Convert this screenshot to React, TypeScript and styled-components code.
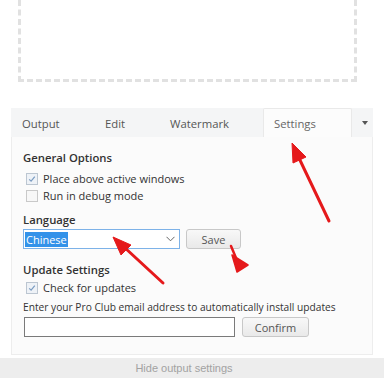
import React from "react";
import styled, { createGlobalStyle } from "styled-components";

const GlobalStyle = createGlobalStyle`
  html, body {
    margin: 0;
    padding: 0;
    background: #ffffff;
  }
  body {
    font-family: "Open Sans", "Noto Sans", "DejaVu Sans", sans-serif;
    color: #333;
  }
`;

const tabs = [
  { label: "Output", width: 83, active: false },
  { label: "Edit", width: 65, active: false },
  { label: "Watermark", width: 104, active: false },
  { label: "Settings", width: 89, active: true },
];

const Checkbox: React.FC<{ checked?: boolean }> = ({ checked }) => (
  <Box $checked={checked}>
    {checked && (
      <svg width="8" height="8" viewBox="0 0 8 8">
        <path d="M1.2 4.3 L3.1 6.2 L6.8 1.6" fill="none" stroke="#7b9cc2" strokeWidth="1.2" />
      </svg>
    )}
  </Box>
);

// red annotation arrows drawn over the screenshot
const Arrows = () => (
  <Overlay width="384" height="378" viewBox="0 0 384 378">
    <g fill="#e5191b" stroke="#e5191b" strokeLinejoin="round">
      <line x1="329" y1="221" x2="298" y2="156" strokeWidth="3" strokeLinecap="round" />
      <polygon points="292,143 293,163 306,157" strokeWidth="1" />
      <line x1="163" y1="283" x2="124" y2="247" strokeWidth="3" strokeLinecap="round" />
      <polygon points="113,237 121,255 131,245" strokeWidth="1" />
      <line x1="231" y1="246" x2="236" y2="258" strokeWidth="2.5" strokeLinecap="round" />
      <polygon points="232,255 248,265 237,272" strokeWidth="1.5" />
    </g>
  </Overlay>
);

export default function App() {
  return (
    <Page>
      <GlobalStyle />
      <DropZone />
      <Panel>
        <TabBar>
          {tabs.map((t) => (
            <Tab key={t.label} $active={t.active} $width={t.width}>
              {t.label}
            </Tab>
          ))}
          <Caret />
        </TabBar>
        <Content>
          <SectionTitle $lh={18}>General Options</SectionTitle>
          <CheckRow $gap={3}>
            <Checkbox checked />
            <span>Place above active windows</span>
          </CheckRow>
          <CheckRow>
            <Checkbox />
            <span>Run in debug mode</span>
          </CheckRow>

          <SectionTitle $gap={8}>Language</SectionTitle>
          <FieldRow $top={1}>
            <Select>
              <Selected>Chinese</Selected>
              <svg width="9" height="6" viewBox="0 0 9 6">
                <path d="M0.5 0.8 L4.5 4.8 L8.5 0.8" fill="none" stroke="#666" strokeWidth="1" />
              </svg>
            </Select>
            <Button $width={55}>Save</Button>
          </FieldRow>

          <SectionTitle $gap={13}>Update Settings</SectionTitle>
          <CheckRow $gap={1}>
            <Checkbox checked />
            <span>Check for updates</span>
          </CheckRow>
          <Hint>Enter your Pro Club email address to automatically install updates</Hint>
          <FieldRow $gap={7} $top={2}>
            <TextInput />
            <Button $width={67}>Confirm</Button>
          </FieldRow>
        </Content>
      </Panel>
      <Footer>Hide output settings</Footer>
      <Arrows />
    </Page>
  );
}

const Page = styled.div`
  position: relative;
  width: 384px;
  height: 378px;
  overflow: hidden;
  display: flex;
  flex-direction: column;
`;

const DropZone = styled.div`
  margin: 0 27px 0 18px;
  height: 79px;
  border: 3px dashed #e1e1e1;
  border-top: none;
`;

const Panel = styled.div`
  margin: 26px 11px 0 11px;
  display: flex;
  flex-direction: column;
`;

const TabBar = styled.div`
  display: flex;
  align-items: stretch;
  height: 29px;
  background: #f4f5f6;
`;

const Tab = styled.div<{ $active?: boolean; $width: number }>`
  box-sizing: border-box;
  width: ${(p) => p.$width}px;
  flex: none;
  display: flex;
  align-items: center;
  padding-left: 10px;
  font-size: 11.3px;
  color: ${(p) => (p.$active ? "#666" : "#555")};
  background: ${(p) => (p.$active ? "#fcfcfc" : "transparent")};
  border: 1px solid ${(p) => (p.$active ? "#e9e9e9" : "transparent")};
  border-bottom: none;
  margin-bottom: ${(p) => (p.$active ? "-1px" : "0")};
  border-radius: 2px 2px 0 0;
`;

const Caret = styled.div`
  margin-left: auto;
  margin-right: 5px;
  align-self: center;
  width: 0;
  height: 0;
  border-left: 3.5px solid transparent;
  border-right: 3.5px solid transparent;
  border-top: 4px solid #555;
`;

const Content = styled.div`
  background: #fbfbfb;
  border: 1px solid #ededed;
  border-top: none;
  padding: 12px 11px 17px 11px;
  display: flex;
  flex-direction: column;
`;

const SectionTitle = styled.div<{ $gap?: number; $lh?: number }>`
  margin-top: ${(p) => p.$gap ?? 0}px;
  font-size: 11.3px;
  font-weight: 600;
  line-height: ${(p) => p.$lh ?? 16}px;
  color: #333;
`;

const CheckRow = styled.div<{ $gap?: number }>`
  margin-top: ${(p) => p.$gap ?? 0}px;
  display: flex;
  align-items: center;
  gap: 5px;
  height: 17px;
  padding-left: 3px;
  font-size: 11px;
  color: #333;
`;

const Box = styled.span<{ $checked?: boolean }>`
  width: 10px;
  height: 10px;
  border: 1px solid ${(p) => (p.$checked ? "#bcc6d1" : "#c9c9c9")};
  background: ${(p) => (p.$checked ? "#eef2f7" : "#f7f7f7")};
  display: flex;
  align-items: center;
  justify-content: center;
`;

const FieldRow = styled.div<{ $gap?: number; $top?: number }>`
  display: flex;
  gap: ${(p) => p.$gap ?? 6}px;
  margin-top: ${(p) => p.$top ?? 3}px;
`;

const Select = styled.div`
  box-sizing: border-box;
  width: 157px;
  height: 20px;
  border: 1px solid #7db2e8;
  background: #fff;
  display: flex;
  align-items: center;
  justify-content: space-between;
  padding: 0 4px 0 1px;
`;

const Selected = styled.span`
  background: #3392e9;
  color: #fff;
  font-size: 11px;
  line-height: 15px;
  padding: 0 1px;
`;

const Button = styled.div<{ $width: number }>`
  box-sizing: border-box;
  width: ${(p) => p.$width}px;
  height: 20px;
  border: 1px solid #c8c8c8;
  border-radius: 3px;
  background: linear-gradient(#f8f8f8, #e9e9e9);
  color: #555;
  font-size: 11px;
  display: flex;
  align-items: center;
  justify-content: center;
`;

const Hint = styled.div`
  margin-top: 3px;
  font-size: 10.2px;
  line-height: 16px;
  color: #333;
  white-space: nowrap;
`;

const TextInput = styled.div`
  box-sizing: border-box;
  width: 211px;
  height: 20px;
  margin-left: 1px;
  border: 1px solid #7a7a7a;
  background: #fff;
`;

const Footer = styled.div`
  margin-top: auto;
  height: 20px;
  background: #ededed;
  color: #a2a2a2;
  font-family: "Liberation Sans", Arial, sans-serif;
  font-size: 11px;
  display: flex;
  align-items: center;
  justify-content: center;
  padding-right: 16px;
`;

const Overlay = styled.svg`
  position: absolute;
  left: 0;
  top: 0;
  pointer-events: none;
`;
